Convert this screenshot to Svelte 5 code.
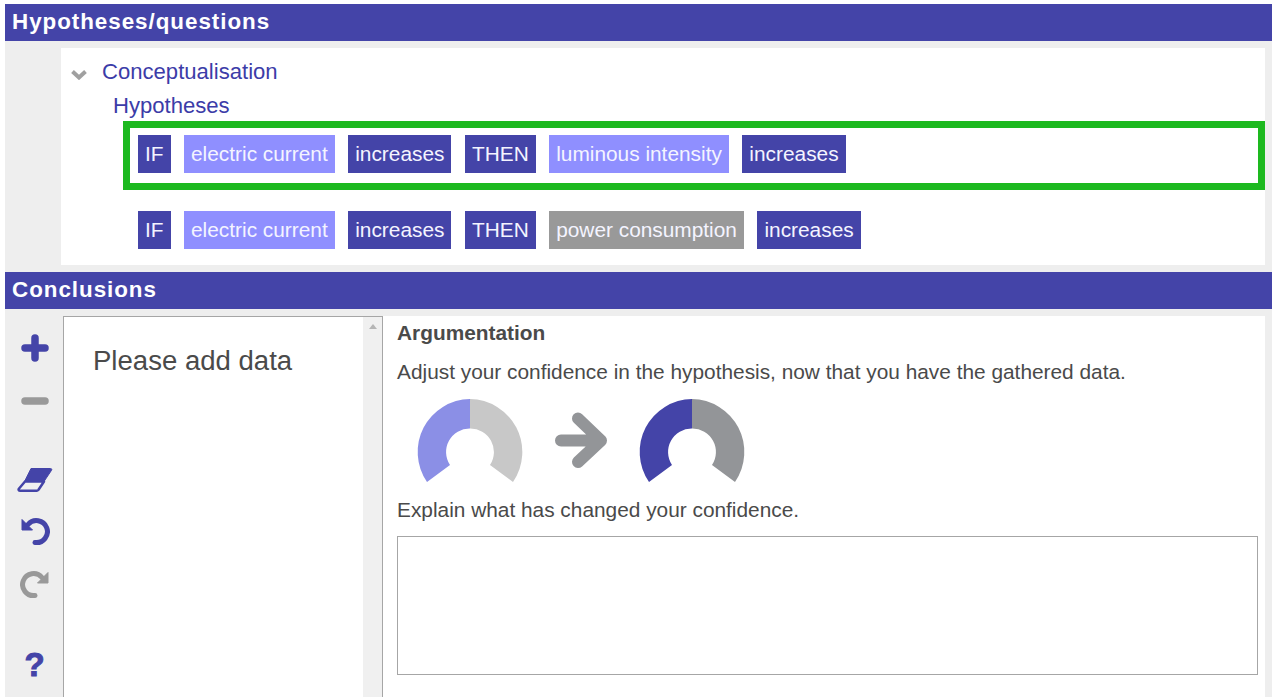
<script>
  const rows = [
    [
      { text: "IF", kind: "dark" },
      { text: "electric current", kind: "light" },
      { text: "increases", kind: "dark" },
      { text: "THEN", kind: "dark" },
      { text: "luminous intensity", kind: "light" },
      { text: "increases", kind: "dark" },
    ],
    [
      { text: "IF", kind: "dark" },
      { text: "electric current", kind: "light" },
      { text: "increases", kind: "dark" },
      { text: "THEN", kind: "dark" },
      { text: "power consumption", kind: "grey" },
      { text: "increases", kind: "dark" },
    ],
  ];

  const gaugeLeft = "M-43 30A53 53 0 0 1 0 -53V-23.500A23.500 23.500 0 0 0 -20 13Z";
  const gaugeRight = "M43 30A53 53 0 0 0 0 -53V-23.500A23.500 23.500 0 0 1 20 13Z";
</script>

<div class="page">
  <h2 class="bar">Hypotheses/questions</h2>
  <section class="hypotheses">
    <div class="tree">
      <div class="node">
        <svg class="chevron" width="16" height="10" viewBox="0 0 16 10">
          <path d="M1.500 1.500l6.500 6 6.500-6" fill="none" stroke="#a0a0a0" stroke-width="4" />
        </svg>
        <span>Conceptualisation</span>
      </div>
      <div class="leaf">Hypotheses</div>
      {#each rows as row, i}
        <div class="row" class:selected={i === 0}>
          {#each row as token}
            <span class="token {token.kind}">{token.text}</span>
          {/each}
        </div>
      {/each}
    </div>
  </section>

  <h2 class="bar">Conclusions</h2>
  <section class="conclusions">
    <div class="tools">
      <svg class="plus" width="28" height="28" viewBox="0 0 28 28">
        <path d="M14 4v20M4 14h20" stroke="#4444a8" stroke-width="7.500" stroke-linecap="round" />
      </svg>
      <svg class="minus" width="28" height="10" viewBox="0 0 28 10">
        <path d="M4 5h20" stroke="#999" stroke-width="7.500" stroke-linecap="round" />
      </svg>
      <svg class="eraser" width="36" height="26" viewBox="0 0 36 26">
        <path d="M14 1.500h19.500c1.200 0 1.600 .9 1 1.800L27 14.500H7.500z" fill="#4444a8" stroke="#4444a8" stroke-linejoin="round" />
        <path d="M8 14.500H27l-5.500 8.200c-.5.600-.9 1-1.700 1H3.200c-1.500 0-2-1-1.300-2z" fill="#f0f0f0" stroke="#4444a8" stroke-width="2.500" stroke-linejoin="round" />
      </svg>
      <svg class="undo" width="30" height="30" viewBox="0 0 30 30">
        <path d="M8 8.500A11 11 0 1 1 15 26.500" fill="none" stroke="#4444a8" stroke-width="5" stroke-linecap="round" />
        <path d="M2 3.500v10.500h10.500z" fill="#4444a8" stroke="#4444a8" stroke-linejoin="round" />
      </svg>
      <svg class="redo" width="30" height="30" viewBox="0 0 30 30">
        <path d="M22 8.500A11 11 0 1 0 15 26.500" fill="none" stroke="#999" stroke-width="5" stroke-linecap="round" />
        <path d="M28 3.500v10.500h-10.500z" fill="#999" stroke="#999" stroke-linejoin="round" />
      </svg>
      <span class="help">?</span>
    </div>

    <div class="data-list">
      <p class="empty">Please add data</p>
      <div class="scrollbar"><i></i></div>
    </div>

    <div class="argument">
      <h3>Argumentation</h3>
      <p class="adjust">Adjust your confidence in the hypothesis, now that you have the gathered data.</p>
      <svg class="gauges" width="360" height="90" viewBox="0 0 360 90">
        <g transform="translate(73 53)">
          <path d={gaugeLeft} fill="#8b8fe6" />
          <path d={gaugeRight} fill="#c8c8c8" />
        </g>
        <path d="M164 41.500h40M181 19.500l23 22-23 21.500" fill="none" stroke="#939598" stroke-width="12" stroke-linecap="round" stroke-linejoin="round" />
        <g transform="translate(295 53)">
          <path d={gaugeLeft} fill="#4444a8" />
          <path d={gaugeRight} fill="#939598" />
        </g>
      </svg>
      <p class="explain">Explain what has changed your confidence.</p>
      <div class="textarea"></div>
    </div>
  </section>
</div>

<style>
  :global(body) {
    background: #fff;
    font-family: "Liberation Sans", Arial, sans-serif;
  }

  .page {
    height: 697px;
    margin: 0 5px;
    padding-top: 4px;
    box-sizing: border-box;
    overflow: hidden;
  }

  .bar {
    margin: 0;
    height: 37px;
    padding-left: 7px;
    background: #4444a8;
    color: #fff;
    font-size: 22.400px;
    line-height: 36px;
    font-weight: bold;
    letter-spacing: 0.960px;
  }

  .hypotheses {
    height: 231px;
    padding: 7px 7px 7px 56px;
    box-sizing: border-box;
    background: #eee;
  }

  .tree {
    height: 217px;
    background: #fff;
    padding: 8px 0 0 10px;
    box-sizing: border-box;
    color: #3c3ca8;
    font-size: 22.100px;
  }

  .node {
    display: flex;
    align-items: center;
    gap: 15px;
    height: 32px;
  }

  .chevron {
    margin-top: 5px;
  }

  .leaf {
    height: 33px;
    line-height: 36px;
    padding-left: 42px;
  }

  .row {
    display: flex;
    gap: 13.500px;
    margin-left: 67px;
    height: 38px;
    margin-top: 21px;
  }

  .row.selected {
    margin-left: 52px;
    margin-top: 0;
    padding: 7px 0 10px 8px;
    border: 7px solid #1db91f;
  }

  .token {
    height: 38px;
    line-height: 37px;
    padding: 0 7px;
    color: #f4f4ff;
    font-size: 20.850px;
    white-space: nowrap;
  }

  .dark {
    background: #4444a8;
  }

  .light {
    background: #8f8fff;
  }

  .grey {
    background: #999;
  }

  .conclusions {
    display: flex;
    height: 388px;
    padding: 7px 7px 0 0;
    box-sizing: border-box;
    background: #eee;
  }

  .tools {
    width: 58px;
    flex: none;
    display: flex;
    flex-direction: column;
    align-items: center;
    padding: 18px 0 0 1px;
    box-sizing: border-box;
  }

  .minus {
    margin-top: 34px;
  }

  .eraser {
    margin-top: 61px;
  }

  .undo {
    margin-top: 23px;
  }

  .redo {
    margin-top: 23px;
  }

  .help {
    margin-top: 47px;
    color: #4444a8;
    font-size: 33px;
    line-height: 38px;
    font-weight: bold;
    -webkit-text-stroke: 1px #4444a8;
  }

  .data-list {
    width: 320px;
    flex: none;
    display: flex;
    background: #fff;
    border: 1px solid #a6a6a6;
    border-bottom: 0;
    box-sizing: border-box;
  }

  .empty {
    flex: 1;
    margin: 0;
    padding: 28px 0 0 29px;
    color: #4a4a4a;
    font-size: 27.550px;
    line-height: 32px;
  }

  .scrollbar {
    width: 19px;
    background: #f0f0f0;
    display: flex;
    justify-content: center;
    align-items: flex-start;
    padding-top: 7px;
    box-sizing: border-box;
  }

  .scrollbar i {
    width: 0;
    height: 0;
    border: 4px solid transparent;
    border-top: 0;
    border-bottom: 5px solid #b5b5b5;
  }

  .argument {
    flex: 1;
    background: #fff;
    padding: 5px 7px 0 14px;
    color: #4a4a4a;
    font-size: 20.850px;
  }

  h3 {
    margin: 0;
    font-size: 20.850px;
    line-height: 24px;
    font-weight: bold;
  }

  .adjust {
    margin: 15px 0 0;
    line-height: 24px;
  }

  .gauges {
    display: block;
    margin-top: 15px;
  }

  .explain {
    margin: 9px 0 0;
    line-height: 24px;
  }

  .textarea {
    height: 139px;
    margin-top: 14px;
    border: 1px solid #a6a6a6;
    box-sizing: border-box;
    background: #fff;
  }
</style>
